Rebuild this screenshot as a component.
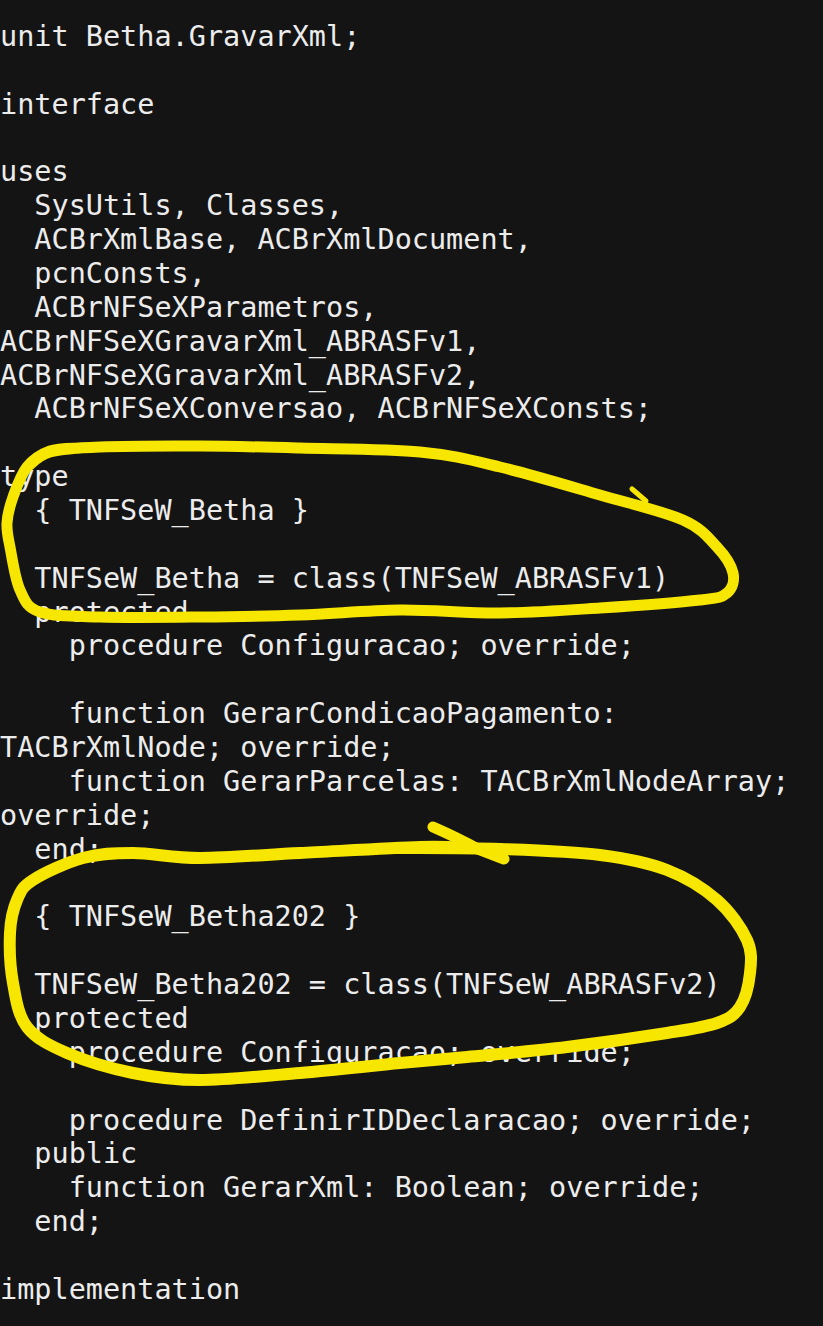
import React from "react";

const lines: string[] = [
  "unit Betha.GravarXml;",
  "",
  "interface",
  "",
  "uses",
  "  SysUtils, Classes,",
  "  ACBrXmlBase, ACBrXmlDocument,",
  "  pcnConsts,",
  "  ACBrNFSeXParametros,",
  "ACBrNFSeXGravarXml_ABRASFv1,",
  "ACBrNFSeXGravarXml_ABRASFv2,",
  "  ACBrNFSeXConversao, ACBrNFSeXConsts;",
  "",
  "type",
  "  { TNFSeW_Betha }",
  "",
  "  TNFSeW_Betha = class(TNFSeW_ABRASFv1)",
  "  protected",
  "    procedure Configuracao; override;",
  "",
  "    function GerarCondicaoPagamento:",
  "TACBrXmlNode; override;",
  "    function GerarParcelas: TACBrXmlNodeArray;",
  "override;",
  "  end;",
  "",
  "  { TNFSeW_Betha202 }",
  "",
  "  TNFSeW_Betha202 = class(TNFSeW_ABRASFv2)",
  "  protected",
  "    procedure Configuracao; override;",
  "",
  "    procedure DefinirIDDeclaracao; override;",
  "  public",
  "    function GerarXml: Boolean; override;",
  "  end;",
  "",
  "implementation",
];

type P = [number, number];

function smooth(pts: P[]): string {
  let d = `M ${pts[0][0]} ${pts[0][1]}`;
  for (let i = 0; i < pts.length - 1; i++) {
    const p0 = pts[i - 1] || pts[i];
    const p1 = pts[i];
    const p2 = pts[i + 1];
    const p3 = pts[i + 2] || p2;
    const c1x = p1[0] + (p2[0] - p0[0]) / 6;
    const c1y = p1[1] + (p2[1] - p0[1]) / 6;
    const c2x = p2[0] - (p3[0] - p1[0]) / 6;
    const c2y = p2[1] - (p3[1] - p1[1]) / 6;
    d += ` C ${c1x} ${c1y} ${c2x} ${c2y} ${p2[0]} ${p2[1]}`;
  }
  return d;
}

const loop1: P[] = [
  [27, 467], [50, 452], [100, 447], [200, 446], [300, 448], [420, 452],
  [500, 467], [600, 495], [683, 520], [717, 547], [733, 573], [727, 593],
  [700, 600], [600, 608], [500, 613], [400, 610], [300, 615], [200, 617],
  [100, 617], [40, 612], [20, 590], [10, 547], [7, 523], [13, 497],
  [27, 467], [50, 451], [80, 448],
];

const loop2: P[] = [
  [400, 848], [500, 849], [600, 855], [667, 870], [717, 900], [747, 940],
  [750, 973], [740, 1007], [717, 1023], [667, 1033], [567, 1047], [467, 1057],
  [400, 1063], [300, 1073], [200, 1080], [133, 1073], [67, 1053], [27, 1027],
  [13, 983], [10, 933], [17, 900], [33, 880], [83, 858], [133, 853],
  [200, 858], [300, 853], [420, 847], [470, 848],
];

export default function App() {
  return (
    <div className="relative w-[823px] h-[1326px] overflow-hidden bg-[#141414]">
      <div
        className="pt-[20px] text-[28.5px] leading-[33.86px] text-[#ececec] whitespace-pre"
        style={{ fontFamily: '"DejaVu Sans Mono", "Liberation Mono", monospace' }}
      >
        {lines.map((l, i) => (
          <div key={i} className="h-[33.86px]">
            {l || "\u00a0"}
          </div>
        ))}
      </div>
      <svg
        className="absolute inset-0 pointer-events-none"
        width={823}
        height={1326}
        viewBox="0 0 823 1326"
      >
        <g fill="none" stroke="#f6e600" strokeLinecap="round" strokeLinejoin="round">
          <path d={smooth(loop1)} strokeWidth={11} />
          <path d="M 632 489 L 646 501" strokeWidth={5} />
          <path d={smooth(loop2)} strokeWidth={12} />
          <path d="M 433 827 Q 458 838 478 849 L 504 859" strokeWidth={11} />
        </g>
      </svg>
    </div>
  );
}
